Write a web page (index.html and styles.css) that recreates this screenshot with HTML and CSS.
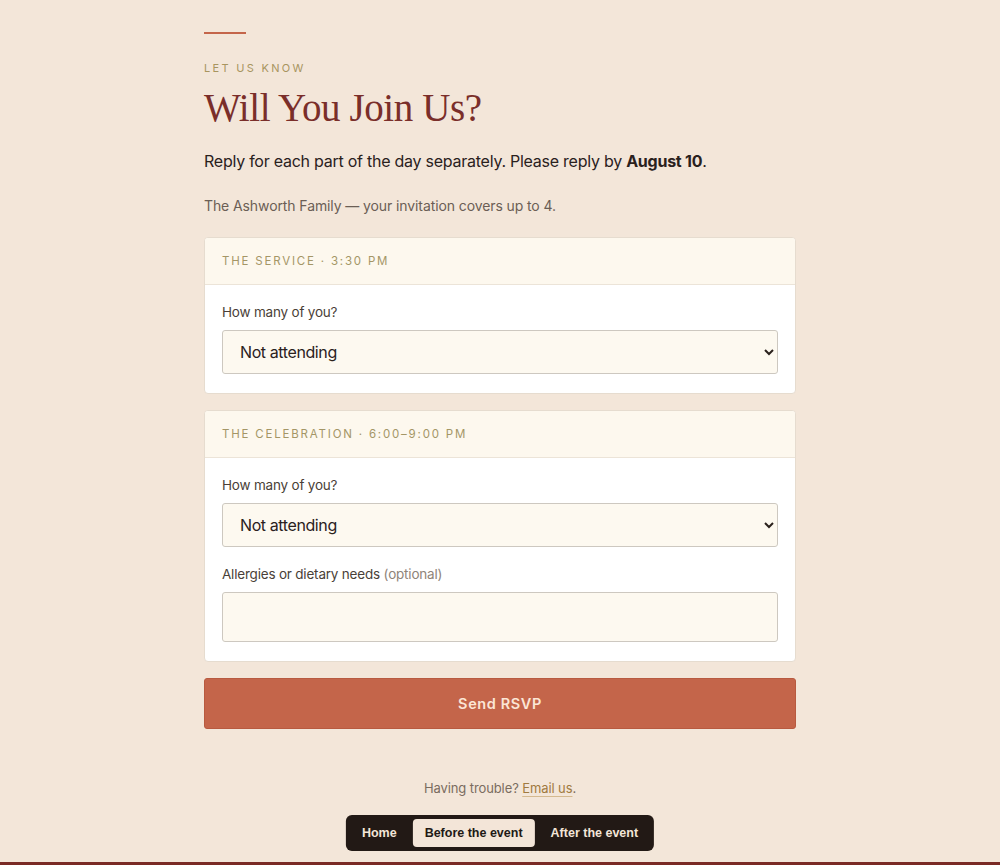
FILE: index.html
```html
<!DOCTYPE html>
<html lang="en">
<head>
    <meta charset="UTF-8">
    <meta name="viewport" content="width=device-width, initial-scale=1.0">
    <title>RSVP - Will You Join Us?</title>
    <link rel="stylesheet" href="styles.css">
</head>
<body>
    <main class="page">
        <div class="rule"></div>
        <p class="eyebrow">Let us know</p>
        <h1>Will You Join Us?</h1>
        <p class="lead">Reply for each part of the day separately. Please reply by <strong>August 10</strong>.</p>
        <p class="household">The Ashworth Family — your invitation covers up to 4.</p>

        <form class="rsvp">
            <section class="card">
                <div class="card-head">The Service · 3:30 PM</div>
                <div class="card-body">
                    <label for="service">How many of you?</label>
                    <select id="service">
                        <option>Not attending</option>
                        <option>1</option>
                        <option>2</option>
                        <option>3</option>
                        <option>4</option>
                    </select>
                </div>
            </section>

            <section class="card">
                <div class="card-head">The Celebration · 6:00–9:00 PM</div>
                <div class="card-body">
                    <label for="celebration">How many of you?</label>
                    <select id="celebration">
                        <option>Not attending</option>
                        <option>1</option>
                        <option>2</option>
                        <option>3</option>
                        <option>4</option>
                    </select>
                    <label for="diet" class="second">Allergies or dietary needs <span class="opt">(optional)</span></label>
                    <input type="text" id="diet">
                </div>
            </section>

            <button type="button" class="send">Send RSVP</button>
        </form>

        <p class="help">Having trouble? <a href="#">Email us</a>.</p>
    </main>

    <nav class="tabs">
        <a href="#">Home</a>
        <a href="#" class="active">Before the event</a>
        <a href="#">After the event</a>
    </nav>
    <div class="bottom-bar"></div>
</body>
</html>
```

FILE: styles.css
```css
* { box-sizing: border-box; }
html, body { margin: 0; padding: 0; }
body { background: #f3e6d9; font-family: Inter, "Liberation Sans", Arial, sans-serif; color: #2a211d; }

.page { width: 592px; margin: 0 auto; padding: 32px 0 120px; }
.rule { width: 42px; height: 2px; background: #c4654a; }
.eyebrow { margin: 27px 0 0; font-size: 11px; letter-spacing: 2.3px; text-transform: uppercase; color: #a8955f; line-height: 14px; }
h1 { margin: 9px 0 0; font-family: "Liberation Serif", "Times New Roman", serif; font-weight: 400; font-size: 39px; line-height: 48px; color: #7a2e2a; letter-spacing: -0.4px; }
.lead { margin: 17px 0 0; font-size: 16px; line-height: 24px; letter-spacing: -0.25px; color: #2a211d; }
.lead strong { font-weight: 700; }
.household { margin: 23px 0 0; font-size: 14px; line-height: 20px; letter-spacing: -0.1px; color: #6b5e55; }

.rsvp { margin-top: 21px; display: flex; flex-direction: column; gap: 16px; }
.card { background: #fff; border: 1px solid #e6dccf; border-radius: 4px; overflow: hidden; }
.card-head { background: #fdf8ee; border-bottom: 1px solid #ece4d8; height: 47px; display: flex; align-items: center; padding: 0 17px; font-size: 11.5px; letter-spacing: 1.8px; text-transform: uppercase; color: #a49666; }
.card-body { display: flex; flex-direction: column; padding: 17px 17px 19px; }
.card-body label { font-size: 13.5px; line-height: 20px; letter-spacing: -0.2px; color: #4a3f38; margin-bottom: 8px; }
.card-body label.second { margin-top: 17px; margin-bottom: 8px; }
.opt { color: #8f8479; }
select, input { width: 100%; font-family: inherit; border: 1px solid #cdc8c0; border-radius: 3px; background: #fdf9f0; color: #2a211d; }
select { height: 44px; font-size: 16px; letter-spacing: -0.4px; padding: 0 12px 0 13px; }
input { height: 50px; font-size: 16px; padding: 0 16px; }

.send { height: 51px; width: 100%; border: 1px solid #b85a40; border-radius: 3px; background: #c4654a; color: #fbe6d6; font-family: inherit; font-size: 14.5px; font-weight: 600; letter-spacing: 0.6px; cursor: pointer; }

.help { margin: 51px 0 0; text-align: center; font-size: 13px; letter-spacing: -0.1px; color: #7a6c60; }
.help a { color: #a07a40; text-decoration: underline; text-decoration-color: #d4b98f; text-underline-offset: 3px; }

.tabs { position: fixed; left: 50%; bottom: 14px; transform: translateX(-50%); display: flex; align-items: center; gap: 4px; background: #221915; border-radius: 6px; padding: 4px; }
.tabs a { font-family: "Liberation Sans", Arial, sans-serif; font-weight: 700; font-size: 12.5px; color: #f3e5d8; text-decoration: none; padding: 6px 12px; border-radius: 4px; line-height: 16px; }
.tabs a.active { background: #f3e5d8; color: #221915; }
.bottom-bar { position: fixed; left: 0; right: 0; bottom: 0; height: 3px; background: #7a2a25; }
```
